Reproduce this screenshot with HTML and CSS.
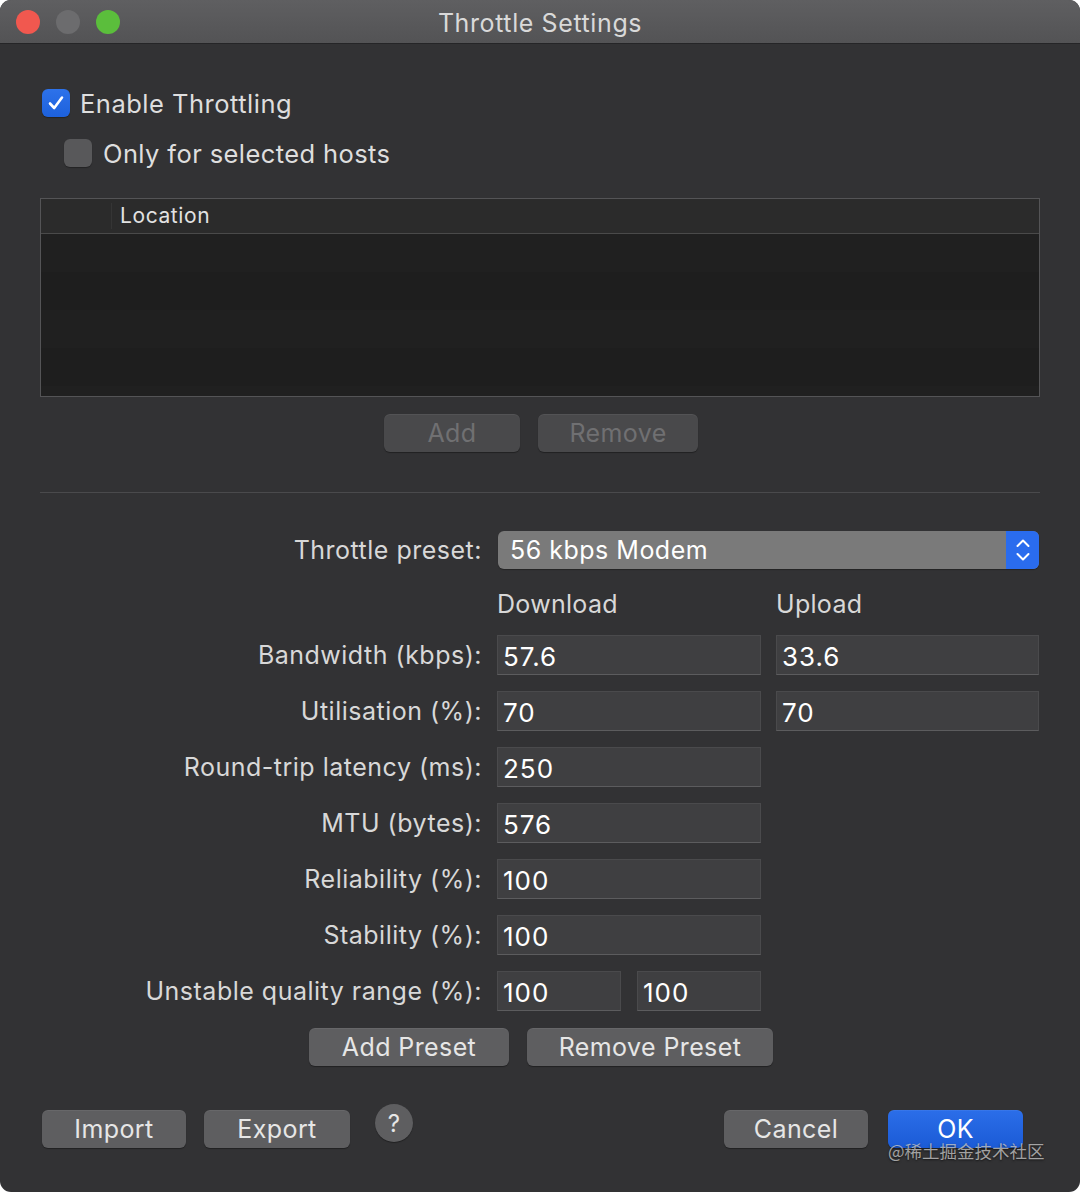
FILE: index.html
```html
<html>
    <head>
        <title>Throttle Settings</title>
        <link rel="stylesheet" href="styles.css">
    </head>
    <body>
        <div class="window">
            <div class="titlebar">
                <div class="lights">
                    <span class="light red"></span>
                    <span class="light gray"></span>
                    <span class="light green"></span>
                </div>
                <div class="title">Throttle Settings</div>
                <div></div>
            </div>
            <div class="content">
                <div class="check-row main">
                    <span class="checkbox checked">
                        <svg width="20" height="20" viewBox="0 0 20 20"><polyline points="4,10.5 8.2,15 16,4.5" fill="none" stroke="#fff" stroke-width="2.6" stroke-linecap="round" stroke-linejoin="round"/></svg>
                    </span>
                    <span>Enable Throttling</span>
                </div>
                <div class="check-row sub">
                    <span class="checkbox"></span>
                    <span>Only for selected hosts</span>
                </div>

                <div class="hosts">
                    <div class="hosts-head">
                        <div class="col-first"></div>
                        <div class="col-location">Location</div>
                    </div>
                    <div class="hosts-body"></div>
                </div>

                <div class="btn-row">
                    <button class="btn disabled add">Add</button>
                    <button class="btn disabled remove">Remove</button>
                </div>

                <hr>

                <div class="form">
                    <div class="label">Throttle preset:</div>
                    <div class="select">
                        <span class="select-text">56 kbps Modem</span>
                        <span class="stepper">
                            <svg width="18" height="26" viewBox="0 0 18 26"><polyline points="3.5,9 9,3.5 14.5,9" fill="none" stroke="#fff" stroke-width="2" stroke-linecap="round" stroke-linejoin="round"/><polyline points="3.5,17 9,22.5 14.5,17" fill="none" stroke="#fff" stroke-width="2" stroke-linecap="round" stroke-linejoin="round"/></svg>
                        </span>
                    </div>

                    <div></div>
                    <div class="col-head">Download</div>
                    <div class="col-head">Upload</div>

                    <div class="label">Bandwidth (kbps):</div>
                    <div class="field">57.6</div>
                    <div class="field">33.6</div>

                    <div class="label">Utilisation (%):</div>
                    <div class="field">70</div>
                    <div class="field">70</div>

                    <div class="label">Round-trip latency (ms):</div>
                    <div class="field">250</div>
                    <div></div>

                    <div class="label">MTU (bytes):</div>
                    <div class="field">576</div>
                    <div></div>

                    <div class="label">Reliability (%):</div>
                    <div class="field">100</div>
                    <div></div>

                    <div class="label">Stability (%):</div>
                    <div class="field">100</div>
                    <div></div>

                    <div class="label">Unstable quality range (%):</div>
                    <div class="field-pair">
                        <div class="field">100</div>
                        <div class="field">100</div>
                    </div>
                    <div></div>
                </div>

                <div class="btn-row preset-row">
                    <button class="btn add-preset">Add Preset</button>
                    <button class="btn remove-preset">Remove Preset</button>
                </div>
            </div>

            <div class="footer">
                <div class="footer-left">
                    <button class="btn import">Import</button>
                    <button class="btn export">Export</button>
                    <span class="help">?</span>
                </div>
                <div class="footer-right">
                    <button class="btn cancel">Cancel</button>
                    <button class="btn primary ok">OK</button>
                </div>
                <div class="watermark">@稀土掘金技术社区</div>
            </div>
        </div>
    </body>
</html>
```
FILE: styles.css
```css
body {
    margin: 0;
    background-color: #ffffff;
    font-family: Inter, "Noto Sans", "Noto Sans CJK SC", sans-serif;
}
.window {
    position: relative;
    width: 1080px;
    height: 1192px;
    background-color: #323234;
    border-radius: 11px;
    overflow: hidden;
}
.titlebar {
    height: 43px;
    display: grid;
    grid-template-columns: 1fr auto 1fr;
    align-items: center;
    background: linear-gradient(#5f5f61, #535355);
    border-bottom: 1px solid #252527;
}
.lights {
    display: flex;
    gap: 16px;
    padding-left: 16px;
}
.light {
    width: 24px;
    height: 24px;
    border-radius: 50%;
}
.red {
    background-color: #f1584f;
}
.gray {
    background-color: #6c6c6e;
}
.green {
    background-color: #5bbe3c;
}
.title {
    color: #d9d9d9;
    font-size: 25px;
    letter-spacing: 0.6px;
    padding-top: 2px;
}
.content {
    padding: 0 40px;
}
.check-row {
    display: flex;
    align-items: center;
    gap: 10px;
    margin-top: 45px;
    height: 28px;
    color: #dedede;
    font-size: 25.5px;
    letter-spacing: 0.5px;
}
.check-row.main {
    padding-left: 2px;
}
.check-row.sub {
    margin-top: 22px;
    padding-left: 24px;
    gap: 11px;
    letter-spacing: 0.4px;
}
.checkbox {
    width: 28px;
    height: 28px;
    border-radius: 6px;
    background-color: #58585a;
    display: flex;
    align-items: center;
    justify-content: center;
    box-shadow: 0 1px 1px rgba(0, 0, 0, 0.3);
}
.checkbox.checked {
    background: linear-gradient(#2d72ea, #1d61dc);
}
.hosts {
    margin-top: 31px;
    height: 197px;
    border: 1px solid #545456;
    background-color: #1e1e1e;
}
.hosts-head {
    display: flex;
    height: 34px;
    background-color: #2b2b2b;
    border-bottom: 1px solid #4a4a4a;
}
.col-first {
    width: 70px;
    margin: 4px 0;
    border-right: 1px solid #353535;
}
.col-location {
    padding-left: 8px;
    line-height: 34px;
    color: #e2e2e2;
    font-size: 21px;
    letter-spacing: 0.6px;
}
.hosts-body {
    height: 162px;
    background: repeating-linear-gradient(#202020 0, #202020 38px, #1e1e1e 38px, #1e1e1e 76px);
}
.btn-row {
    display: flex;
    justify-content: center;
    gap: 18px;
    margin-top: 17px;
    padding-left: 2px;
}
.btn {
    height: 38px;
    border: none;
    border-radius: 6px;
    background-color: #5e5e60;
    color: #e6e6e6;
    font-family: Inter, "Noto Sans", sans-serif;
    font-size: 25px;
    letter-spacing: 0.4px;
    padding: 0;
    box-shadow: 0 1px 1px rgba(0, 0, 0, 0.35), inset 0 1px 0 rgba(255, 255, 255, 0.06);
}
.btn.disabled {
    background-color: #49494b;
    color: #707072;
}
.add {
    width: 136px;
}
.remove {
    width: 160px;
}
hr {
    margin: 40px 0 0 0;
    border: none;
    border-top: 1px solid #4a4a4c;
}
.form {
    display: grid;
    grid-template-columns: 442px 264px 263px;
    grid-template-rows: 38px 34px repeat(7, 40px);
    column-gap: 15px;
    row-gap: 16px;
    margin-top: 38px;
    align-items: center;
}
.label {
    text-align: right;
    color: #d8d8d8;
    font-size: 25px;
    letter-spacing: 0.5px;
}
.select {
    grid-column: 2 / span 2;
    height: 38px;
    margin-left: 1px;
    display: flex;
    align-items: center;
    justify-content: space-between;
    background-color: #7a7a7a;
    border-radius: 6px;
    overflow: hidden;
    box-shadow: 0 1px 1px rgba(0, 0, 0, 0.3);
}
.select-text {
    padding-left: 12px;
    color: #ffffff;
    font-size: 25px;
    letter-spacing: 0.5px;
}
.stepper {
    width: 33px;
    height: 38px;
    display: flex;
    align-items: center;
    justify-content: center;
    background-color: #2a6cee;
}
.col-head {
    color: #d8d8d8;
    font-size: 25px;
    letter-spacing: 0.3px;
    padding-top: 4px;
}
.field {
    height: 40px;
    box-sizing: border-box;
    background-color: #3f3f41;
    border: 1px solid #4a4a4c;
    border-bottom-color: #5c5c5e;
    color: #ffffff;
    font-size: 26px;
    letter-spacing: 1px;
    line-height: 42px;
    padding-left: 5px;
}
.field-pair {
    display: flex;
    gap: 16px;
}
.field-pair .field {
    width: 124px;
}
.preset-row {
    margin-top: 17px;
}
.add-preset {
    width: 200px;
}
.remove-preset {
    width: 246px;
}
.footer {
    display: flex;
    justify-content: space-between;
    margin-top: 44px;
    padding: 0 57px 0 42px;
}
.footer-left, .footer-right {
    display: flex;
    align-items: center;
    gap: 18px;
}
.footer-right {
    gap: 20px;
}
.import {
    width: 144px;
}
.export {
    width: 146px;
}
.help {
    width: 38px;
    height: 38px;
    margin-left: 7px;
    margin-top: -12px;
    border-radius: 50%;
    background-color: #5e5e60;
    color: #e6e6e6;
    font-size: 24px;
    display: flex;
    align-items: center;
    justify-content: center;
    box-shadow: 0 1px 1px rgba(0, 0, 0, 0.35);
}
.cancel {
    width: 144px;
}
.primary {
    background: linear-gradient(#2b6ee9, #1b5bd6);
    color: #ffffff;
    font-size: 25px;
}
.ok {
    width: 135px;
}
.watermark {
    position: absolute;
    left: 888px;
    top: 1138px;
    color: rgba(205, 205, 205, 0.75);
    font-size: 17.5px;
    font-family: "Noto Sans CJK SC", sans-serif;
    text-shadow: 0 1px 2px rgba(0, 0, 0, 0.6);
}
```
